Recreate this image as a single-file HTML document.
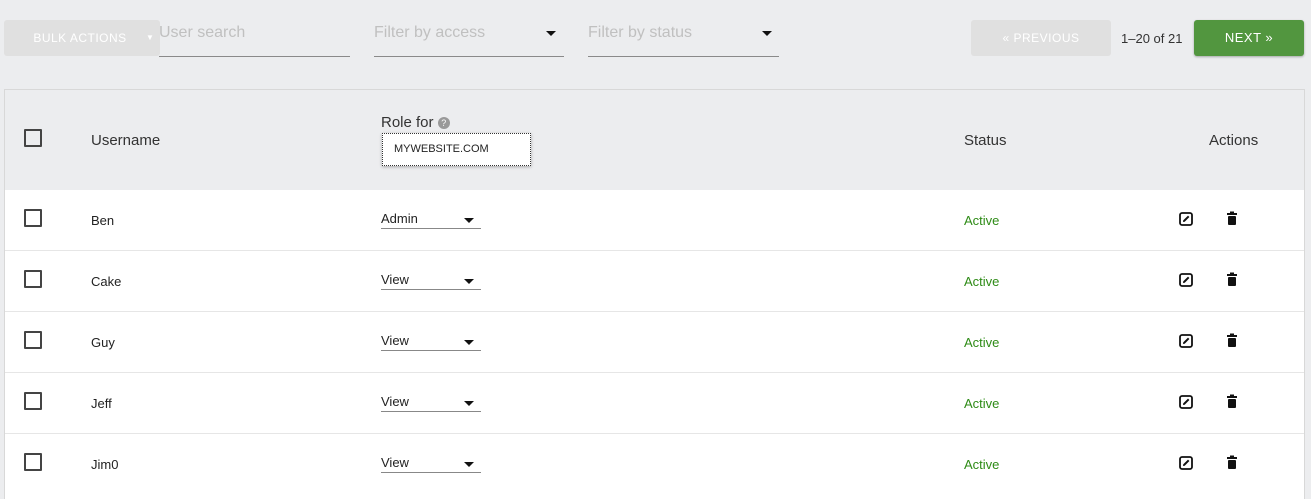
<!DOCTYPE html>
<html><head><style>
*{margin:0;padding:0;box-sizing:border-box}
body{width:1311px;height:491px;background:#ecedef;font-family:"Liberation Sans",sans-serif;position:relative;overflow:hidden;color:#222}
.a{position:absolute}
.btn{position:absolute;border-radius:3px;font-size:12px;letter-spacing:.5px;text-align:center}
.field{position:absolute;border-bottom:1px solid #8a8a8a;height:57px;top:0}
.ph{position:absolute;top:24px;font-size:16px;color:#c0c0c0}
.tri{position:absolute;width:0;height:0;border-left:5px solid transparent;border-right:5px solid transparent;border-top:5px solid #111}
.table{position:absolute;left:4px;top:89px;width:1301px;height:410px;border:1px solid #d8d8d8;border-bottom:none;background:#fff}
.head{position:absolute;left:0;top:0;width:100%;height:100px;background:#ecedef}
.cb{position:absolute;width:18px;height:18px;border:2px solid #444;border-radius:1px}
.row{position:absolute;left:0;width:100%;height:61px;border-top:1px solid #e6e6e6}
.t{position:absolute;font-size:13px}
.sel{position:absolute;left:376px;width:100px;height:1px;top:38px;background:#888}
</style></head><body>
<div class="btn" style="left:4px;top:20px;width:156px;height:36px;background:#e0e0e0;color:#fff;line-height:36px;text-indent:-4px">BULK ACTIONS</div>
<div class="a" style="left:146px;top:33px;font-size:8px;color:#fff">▼</div>
<div class="field" style="left:159px;width:191px"><div class="ph" style="left:0">User search</div></div>
<div class="field" style="left:374px;width:190px"><div class="ph" style="left:0">Filter by access</div><div class="tri" style="left:172px;top:31px"></div></div>
<div class="field" style="left:588px;width:191px"><div class="ph" style="left:0">Filter by status</div><div class="tri" style="left:174px;top:31px"></div></div>
<div class="btn" style="left:971px;top:20px;width:140px;height:36px;background:#e0e0e0;color:#fff;line-height:36px">« PREVIOUS</div>
<div class="a" style="left:1121px;top:31px;font-size:13px;color:#333">1–20 of 21</div>
<div class="btn" style="left:1194px;top:20px;width:110px;height:36px;background:#52963f;color:#fff;line-height:36px;font-size:13px;box-shadow:0 1px 2px rgba(0,0,0,.3)">NEXT »</div>
<div class="table">
<div class="head">
<div class="cb" style="left:19px;top:39px"></div>
<div class="t" style="left:86px;top:42px;font-size:15px;color:#333">Username</div>
<div class="t" style="left:376px;top:24px;font-size:15px;color:#333">Role for <span style="display:inline-block;width:12px;height:12px;border-radius:50%;background:#999;color:#fff;font-size:9px;text-align:center;line-height:12px;vertical-align:1px">?</span></div>
<div class="a" style="left:377px;top:43px;width:149px;height:33px;border:1px dotted #333;background:#fff;box-shadow:0 1px 3px rgba(0,0,0,.3);font-size:11px;line-height:31px;padding-left:11px">MYWEBSITE.COM</div>
<div class="t" style="left:959px;top:42px;font-size:15px;color:#333">Status</div>
<div class="t" style="left:1204px;top:42px;font-size:15px;color:#333">Actions</div>
</div>
<div class="row" style="top:100px;border-top:none">
<div class="cb" style="left:19px;top:19px"></div><div class="t" style="left:86px;top:23px">Ben</div>
<div class="t" style="left:376px;top:21px">Admin</div><div class="sel"></div><div class="tri" style="left:459px;top:28px"></div>
<div class="t" style="left:959px;top:23px;color:#2e8b16">Active</div>
<svg class="a" style="left:1174px;top:22px" width="14" height="14" viewBox="0 0 14 14"><rect x="1" y="1" width="12" height="12" rx="2" fill="none" stroke="#111" stroke-width="1.8"/><path d="M4 10 L4.3 8.3 L9 3.6 L10.4 5 L5.7 9.7 Z" fill="#111"/></svg>
<svg class="a" style="left:1221px;top:21px" width="12" height="15" viewBox="0 0 12 15"><rect x="1" y="2" width="10" height="2" fill="#111"/><rect x="4" y="0.5" width="4" height="2" fill="#111"/><rect x="2" y="5" width="8" height="9" rx="1" fill="#111"/></svg>
</div>
<div class="row" style="top:160px">
<div class="cb" style="left:19px;top:19px"></div><div class="t" style="left:86px;top:23px">Cake</div>
<div class="t" style="left:376px;top:21px">View</div><div class="sel"></div><div class="tri" style="left:459px;top:28px"></div>
<div class="t" style="left:959px;top:23px;color:#2e8b16">Active</div>
<svg class="a" style="left:1174px;top:22px" width="14" height="14" viewBox="0 0 14 14"><rect x="1" y="1" width="12" height="12" rx="2" fill="none" stroke="#111" stroke-width="1.8"/><path d="M4 10 L4.3 8.3 L9 3.6 L10.4 5 L5.7 9.7 Z" fill="#111"/></svg>
<svg class="a" style="left:1221px;top:21px" width="12" height="15" viewBox="0 0 12 15"><rect x="1" y="2" width="10" height="2" fill="#111"/><rect x="4" y="0.5" width="4" height="2" fill="#111"/><rect x="2" y="5" width="8" height="9" rx="1" fill="#111"/></svg>
</div>
<div class="row" style="top:221px">
<div class="cb" style="left:19px;top:19px"></div><div class="t" style="left:86px;top:23px">Guy</div>
<div class="t" style="left:376px;top:21px">View</div><div class="sel"></div><div class="tri" style="left:459px;top:28px"></div>
<div class="t" style="left:959px;top:23px;color:#2e8b16">Active</div>
<svg class="a" style="left:1174px;top:22px" width="14" height="14" viewBox="0 0 14 14"><rect x="1" y="1" width="12" height="12" rx="2" fill="none" stroke="#111" stroke-width="1.8"/><path d="M4 10 L4.3 8.3 L9 3.6 L10.4 5 L5.7 9.7 Z" fill="#111"/></svg>
<svg class="a" style="left:1221px;top:21px" width="12" height="15" viewBox="0 0 12 15"><rect x="1" y="2" width="10" height="2" fill="#111"/><rect x="4" y="0.5" width="4" height="2" fill="#111"/><rect x="2" y="5" width="8" height="9" rx="1" fill="#111"/></svg>
</div>
<div class="row" style="top:282px">
<div class="cb" style="left:19px;top:19px"></div><div class="t" style="left:86px;top:23px">Jeff</div>
<div class="t" style="left:376px;top:21px">View</div><div class="sel"></div><div class="tri" style="left:459px;top:28px"></div>
<div class="t" style="left:959px;top:23px;color:#2e8b16">Active</div>
<svg class="a" style="left:1174px;top:22px" width="14" height="14" viewBox="0 0 14 14"><rect x="1" y="1" width="12" height="12" rx="2" fill="none" stroke="#111" stroke-width="1.8"/><path d="M4 10 L4.3 8.3 L9 3.6 L10.4 5 L5.7 9.7 Z" fill="#111"/></svg>
<svg class="a" style="left:1221px;top:21px" width="12" height="15" viewBox="0 0 12 15"><rect x="1" y="2" width="10" height="2" fill="#111"/><rect x="4" y="0.5" width="4" height="2" fill="#111"/><rect x="2" y="5" width="8" height="9" rx="1" fill="#111"/></svg>
</div>
<div class="row" style="top:343px">
<div class="cb" style="left:19px;top:19px"></div><div class="t" style="left:86px;top:23px">Jim0</div>
<div class="t" style="left:376px;top:21px">View</div><div class="sel"></div><div class="tri" style="left:459px;top:28px"></div>
<div class="t" style="left:959px;top:23px;color:#2e8b16">Active</div>
<svg class="a" style="left:1174px;top:22px" width="14" height="14" viewBox="0 0 14 14"><rect x="1" y="1" width="12" height="12" rx="2" fill="none" stroke="#111" stroke-width="1.8"/><path d="M4 10 L4.3 8.3 L9 3.6 L10.4 5 L5.7 9.7 Z" fill="#111"/></svg>
<svg class="a" style="left:1221px;top:21px" width="12" height="15" viewBox="0 0 12 15"><rect x="1" y="2" width="10" height="2" fill="#111"/><rect x="4" y="0.5" width="4" height="2" fill="#111"/><rect x="2" y="5" width="8" height="9" rx="1" fill="#111"/></svg>
</div>
</div>
</body></html>
